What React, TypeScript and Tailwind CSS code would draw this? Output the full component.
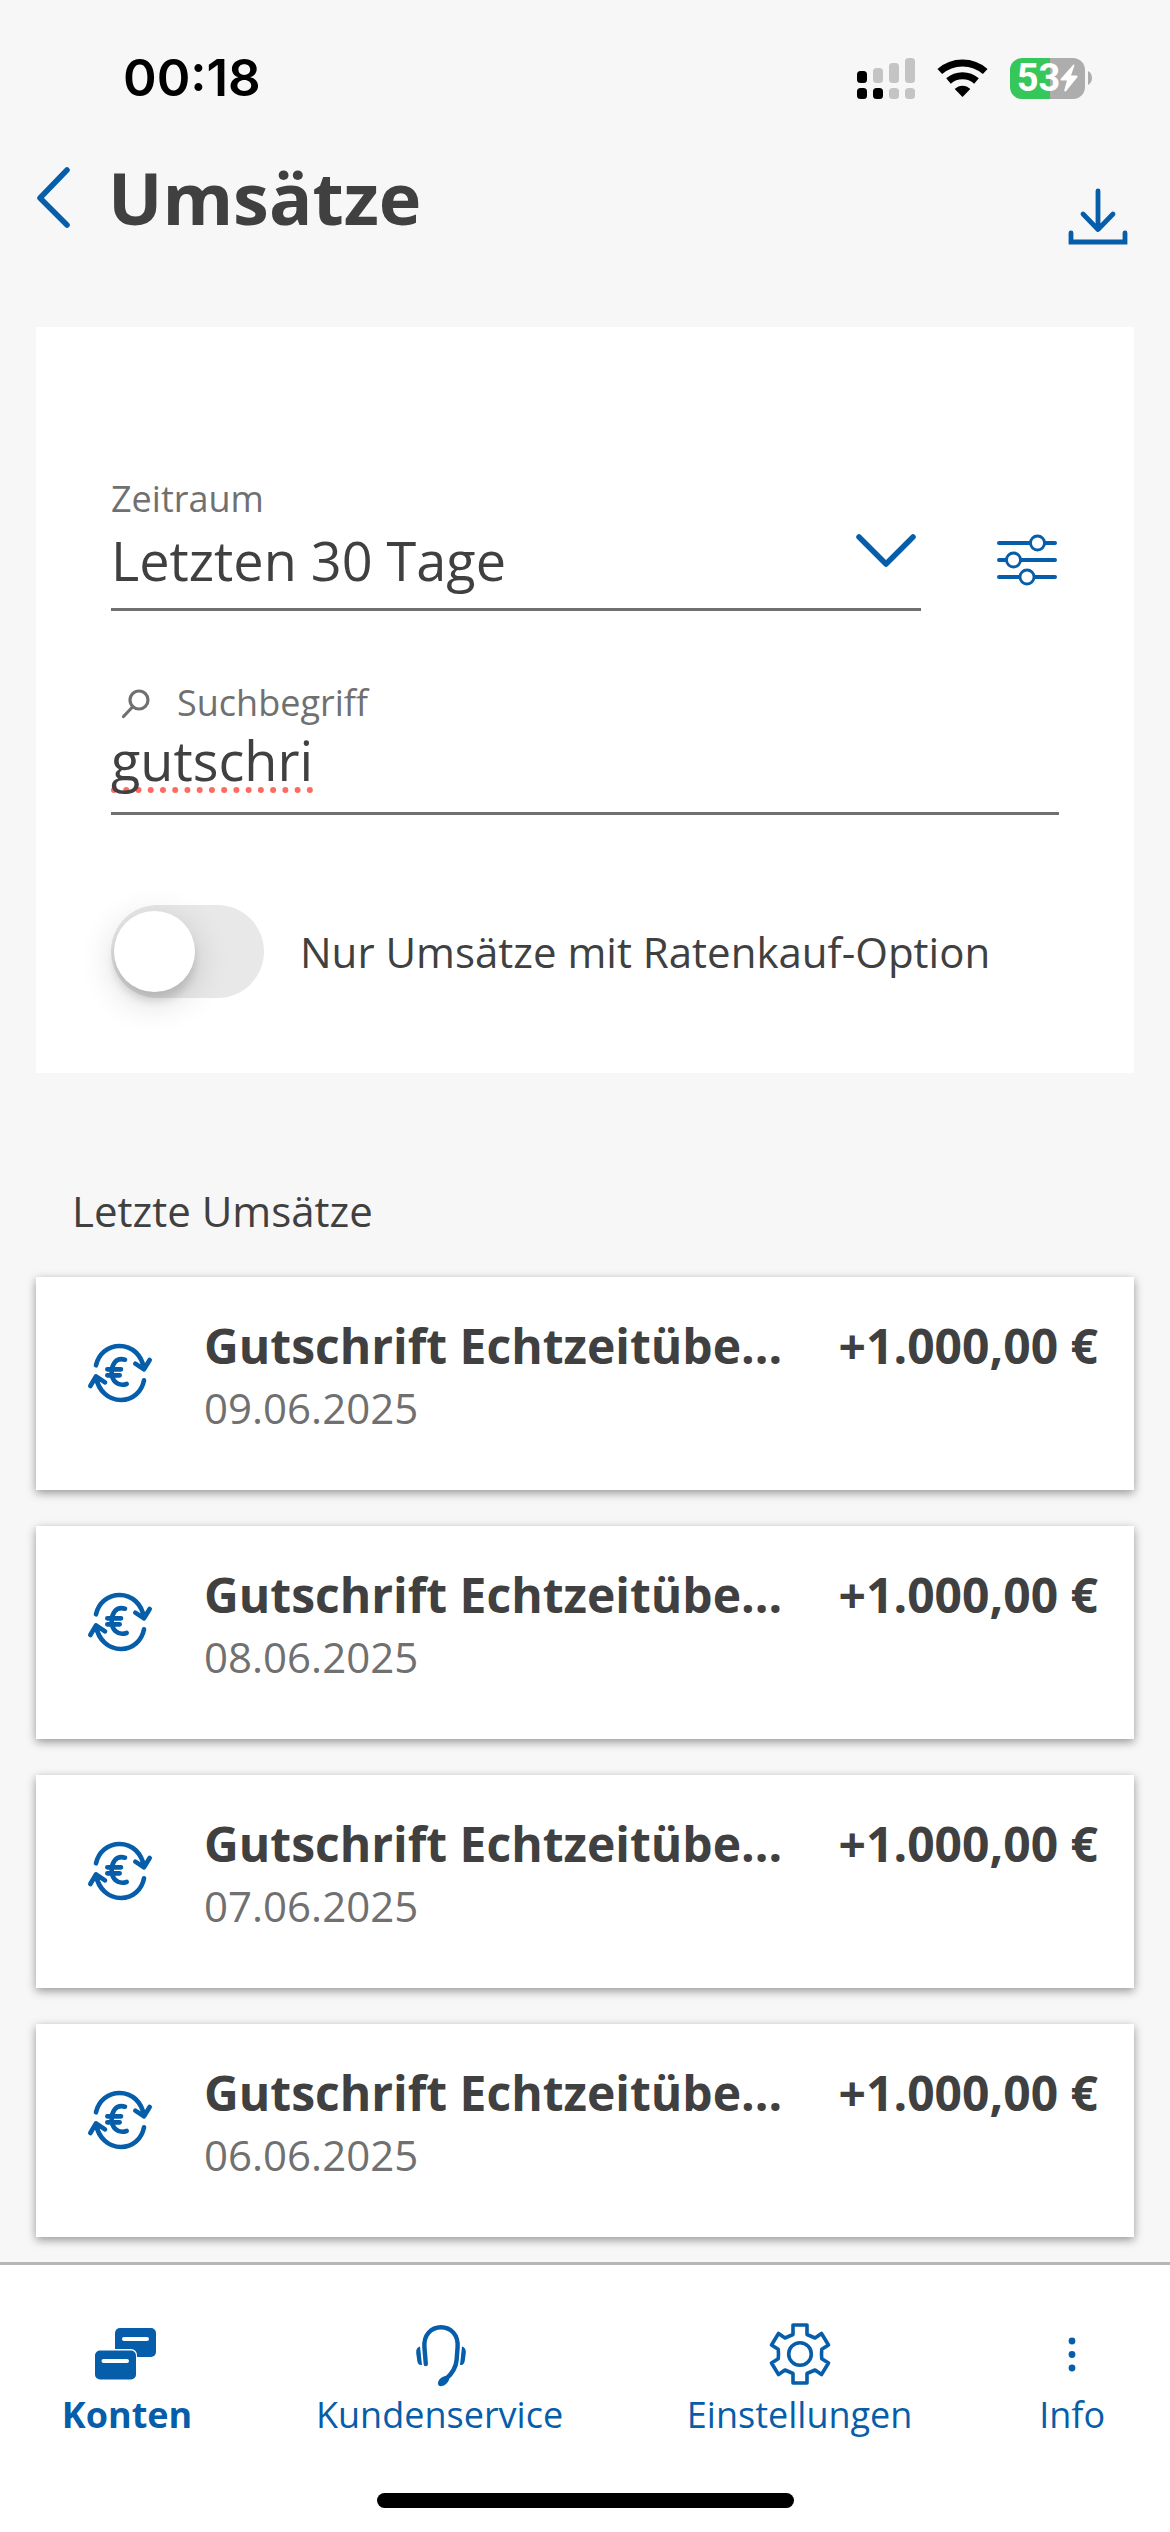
import { useState } from "react";

const transactions = [
  { title: "Gutschrift Echtzeitübe...", date: "09.06.2025", amount: "+1.000,00 €" },
  { title: "Gutschrift Echtzeitübe...", date: "08.06.2025", amount: "+1.000,00 €" },
  { title: "Gutschrift Echtzeitübe...", date: "07.06.2025", amount: "+1.000,00 €" },
  { title: "Gutschrift Echtzeitübe...", date: "06.06.2025", amount: "+1.000,00 €" },
];

const navItems = [
  { label: "Konten", icon: <AccountsIcon />, active: true },
  { label: "Kundenservice", icon: <HeadsetIcon />, active: false },
  { label: "Einstellungen", icon: <GearIcon />, active: false },
  { label: "Info", icon: <DotsIcon />, active: false },
];

function AccountsIcon() {
  return (
    <svg viewBox="0 0 72 72" className="size-[72px]" aria-hidden="true">
      <rect x="24" y="10" width="41" height="29" rx="5" fill="currentColor" />
      <path d="M33 21H56" stroke="#fff" strokeWidth="4" strokeLinecap="round" />
      <rect x="3" y="31" width="43" height="31" rx="6" fill="#fff" />
      <rect x="4" y="32.5" width="41" height="29" rx="5" fill="currentColor" />
      <path d="M12.5 43H36" stroke="#fff" strokeWidth="4" strokeLinecap="round" />
    </svg>
  );
}

function HeadsetIcon() {
  return (
    <svg viewBox="0 0 72 72" className="size-[72px]" aria-hidden="true">
      <path
        d="M21.8 46L20.4 29C19.6 17 27 9.2 37 9.2S54.4 17 53.6 29L52.6 42C52 49 48.5 55 42.5 60.5"
        fill="none"
        stroke="currentColor"
        strokeWidth="4.4"
        strokeLinecap="round"
      />
      <ellipse cx="39.5" cy="63" rx="6.5" ry="4" transform="rotate(-40 39.5 63)" fill="currentColor" />
      <path d="M16 28.5L18 47C14.8 47.5 13.6 45.5 13.2 42.5L12.2 35C11.9 31.5 13.2 29 16 28.5Z" fill="currentColor" />
      <path d="M58 28.5L56 47C59.2 47.5 60.4 45.5 60.8 42.5L61.8 35C62.1 31.5 60.8 29 58 28.5Z" fill="currentColor" />
    </svg>
  );
}

function GearIcon() {
  return (
    <svg
      viewBox="-36 -36 72 72"
      className="size-[72px]"
      fill="none"
      stroke="currentColor"
      strokeWidth="3.6"
      strokeLinejoin="round"
      aria-hidden="true"
    >
      <path d="M-7 -29H7V-19.5L15 -16L21.5 -20.5L28.5 -9L21.8 -4.7Q21.2 0 21.8 4.7L28.5 9L21.5 20.5L15 16L7 19.5V29H-7V19.5L-15 16L-21.5 20.5L-28.5 9L-21.8 4.7Q-21.2 0 -21.8 -4.7L-28.5 -9L-21.5 -20.5L-15 -16L-7 -19.5Z" />
      <circle r="11.3" />
    </svg>
  );
}

function DotsIcon() {
  return (
    <svg viewBox="0 0 72 72" className="size-[72px]" fill="currentColor" aria-hidden="true">
      <circle cx="36" cy="23" r="3.4" />
      <circle cx="36" cy="36.5" r="3.4" />
      <circle cx="36" cy="50" r="3.4" />
    </svg>
  );
}

function TransferIcon() {
  return (
    <svg
      viewBox="192 234 216 216"
      className="mt-6 size-[72px] shrink-0 text-[#065da9]"
      fill="none"
      stroke="currentColor"
      strokeWidth="14"
      strokeLinecap="round"
      strokeLinejoin="round"
      aria-hidden="true"
    >
      <path d="M228 316C236 281 264 258 299 258C336 258 366 285 372 327M346 311L372 328L389 300" />
      <path d="M372 361C365 396 338 420 303 420C265 420 235 392 228 351M211 378L228 349L255 367" />
      <path d="M315 299C286 291 275 316 275 337C275 361 292 381 320 372M262 328H303M262 346H299" />
    </svg>
  );
}

function StatusBar() {
  return (
    <div className="flex items-center justify-between pt-12 pr-[78px] pl-[123px] font-['Inter',sans-serif]">
      <span className="text-[51px] leading-[60px] font-semibold text-black">00:18</span>
      <div className="flex items-center gap-[22px]">
        <svg viewBox="0 0 58 41" className="h-[41px] w-[58px]" fill="#c4c4c4" aria-hidden="true">
          <rect y="13" width="10" height="12" rx="3.5" fill="#000" />
          <rect x="16" y="10" width="10" height="15" rx="3.5" />
          <rect x="32" y="5" width="10" height="20" rx="3.5" />
          <rect x="48" width="10" height="25" rx="3.5" />
          <rect y="30" width="10" height="11" rx="3.5" fill="#000" />
          <rect x="16" y="30" width="10" height="11" rx="3.5" fill="#000" />
          <rect x="32" y="30" width="10" height="11" rx="3.5" />
          <rect x="48" y="30" width="10" height="11" rx="3.5" />
        </svg>
        <svg viewBox="0 0 51 41" className="h-[41px] w-[51px]" aria-hidden="true">
          <path d="M2.8 13.5C15.5 2 35.5 2 48.2 13.5" fill="none" stroke="#000" strokeWidth="7" />
          <path d="M11.5 23C19.5 16 31.5 16 39.5 23" fill="none" stroke="#000" strokeWidth="7" />
          <path d="M17.7 31C22 26.5 29 26.5 33.3 31L25.5 39Z" />
        </svg>
        <div className="flex items-center gap-[3px]">
          <div className="flex h-[41px] w-[75px] items-center justify-center rounded-[12px] bg-linear-to-r from-[#35c759] from-53% to-[#adadad] to-53%">
            <span className="font-['Roboto',sans-serif] text-[38px] leading-[41px] font-bold text-white">53</span>
            <svg viewBox="0 0 18 28" className="h-7 w-[18px]" fill="#fff" aria-hidden="true">
              <path d="M13.5 .5L.6 15Q0 16.5 1.5 16.5H7L4.2 26.5Q4.5 28 6 27.3L17.5 13Q18 11.5 16.5 11.5H11L14.5 1.3Q14.5 .3 13.5 .5Z" />
            </svg>
          </div>
          <svg viewBox="0 0 4 14" className="h-3.5 w-1" aria-hidden="true">
            <path d="M0 0C5.3 2.5 5.3 11.5 0 14Z" fill="#adadad" />
          </svg>
        </div>
      </div>
    </div>
  );
}

function FilterCard() {
  const [period, setPeriod] = useState("30");
  const [query, setQuery] = useState("gutschri");
  const [onlyInstallments, setOnlyInstallments] = useState(false);

  return (
    <section className="mx-9 bg-white px-[75px] pt-[147px] pb-[75px]">
      <div className="flex items-end">
        <div className="min-w-0 flex-1">
          <label htmlFor="period" className="block text-[36px] leading-[50px] text-[#707070]">
            Zeitraum
          </label>
          <div className="relative -mt-1">
            <select
              id="period"
              value={period}
              onChange={(e) => setPeriod(e.target.value)}
              className="block h-[91px] w-full appearance-none border-b-[3px] border-[#707070] bg-transparent pb-3 text-[54px] text-[#404040] outline-none"
            >
              <option value="30">Letzten 30 Tage</option>
              <option value="90">Letzten 90 Tage</option>
            </select>
            <svg
              viewBox="0 0 66 39"
              className="pointer-events-none absolute top-3 right-0 h-[39px] w-[66px]"
              fill="none"
              stroke="#065da9"
              strokeWidth="5.5"
              strokeLinecap="round"
              strokeLinejoin="round"
              aria-hidden="true"
            >
              <path d="M4 5L31 32L58 5" />
            </svg>
          </div>
        </div>
        <button type="button" aria-label="Filter" className="mb-5 ml-[72px] flex h-[62px] w-[66px] items-center">
          <svg viewBox="0 0 66 54" className="h-[54px] w-[66px]" stroke="#065da9" strokeLinecap="round" aria-hidden="true">
            <path d="M6 10H62M6 27H62M6 44H62" strokeWidth="4" />
            <g fill="#fff" strokeWidth="2.8">
              <circle cx="44.5" cy="10" r="7" />
              <circle cx="20.5" cy="27" r="7" />
              <circle cx="34" cy="44" r="7" />
            </g>
          </svg>
        </button>
      </div>

      <div className="mt-[67px]">
        <label htmlFor="query" className="flex items-center gap-6 pl-2 text-[36px] leading-[50px] text-[#707070]">
          <svg
            viewBox="0 0 34 34"
            className="size-[34px]"
            fill="none"
            stroke="currentColor"
            strokeWidth="3.2"
            strokeLinecap="round"
            aria-hidden="true"
          >
            <circle cx="20" cy="14" r="9" />
            <path d="M13.5 21L4.5 30.5" />
          </svg>
          Suchbegriff
        </label>
        <input
          id="query"
          type="text"
          value={query}
          spellCheck={false}
          onChange={(e) => setQuery(e.target.value)}
          className="block h-[87px] w-full border-b-[3px] border-[#707070] bg-transparent pb-5 text-[54px] text-[#404040] underline decoration-[#ff6b61] decoration-dotted decoration-[6px] underline-offset-[6px] outline-none [text-decoration-skip-ink:none]"
        />
      </div>

      <div className="mt-[90px] flex items-center gap-9">
        <input
          id="installments"
          type="checkbox"
          role="switch"
          checked={onlyInstallments}
          onChange={(e) => setOnlyInstallments(e.target.checked)}
          className="relative h-[93px] w-[153px] shrink-0 appearance-none rounded-full bg-[#e8e8e8] before:absolute before:top-[6px] before:left-[3px] before:size-[81px] before:rounded-full before:bg-white before:shadow-[0_9px_36px_rgba(0,0,0,0.16),0_9px_9px_rgba(0,0,0,0.12)] before:transition-transform checked:bg-[#065da9] checked:before:translate-x-[66px]"
        />
        <label htmlFor="installments" className="text-[42px] leading-[60px] text-[#404040]">
          Nur Umsätze mit Ratenkauf-Option
        </label>
      </div>
    </section>
  );
}

export default function App() {
  return (
    <div className="flex min-h-screen flex-col bg-[#f7f7f7] font-['Open_Sans',sans-serif] text-[#404040]">
      <StatusBar />

      <header className="flex items-end justify-between pt-[41px] pr-9 pb-[82px] pl-[33px]">
        <div className="flex items-center gap-[33px]">
          <button type="button" aria-label="Zurück">
            <svg
              viewBox="0 0 42 66"
              className="h-[66px] w-[42px]"
              fill="none"
              stroke="#065da9"
              strokeWidth="5.5"
              strokeLinecap="round"
              strokeLinejoin="round"
              aria-hidden="true"
            >
              <path d="M34 6L7 34L34 61" />
            </svg>
          </button>
          <h1 className="text-[72px] leading-[96px] font-bold">Umsätze</h1>
        </div>
        <button type="button" aria-label="Herunterladen">
          <svg
            viewBox="0 0 72 60"
            className="h-[60px] w-[72px]"
            fill="none"
            stroke="#065da9"
            strokeWidth="4.8"
            strokeLinecap="round"
            aria-hidden="true"
          >
            <path d="M36 6V44M21 29L36 44.5L51 29" strokeLinejoin="round" />
            <path d="M9 48V57H63V48" />
          </svg>
        </button>
      </header>

      <main>
        <FilterCard />

        <section className="px-9 pt-[108px] pb-[25px]">
          <h2 className="pl-9 text-[42px] leading-[60px]">Letzte Umsätze</h2>
          <ul className="mt-9 flex flex-col gap-9">
            {transactions.map((item) => (
              <li
                key={item.date}
                className="flex items-start gap-12 bg-white pt-[37px] pr-9 pb-[52px] pl-12 shadow-[0_3px_9px_rgba(0,0,0,0.4)]"
              >
                <TransferIcon />
                <div className="min-w-0 flex-1">
                  <div className="flex justify-between gap-6 text-[48px] leading-[64px] font-bold">
                    <h3 className="truncate">{item.title}</h3>
                    <span className="whitespace-nowrap">{item.amount}</span>
                  </div>
                  <p className="text-[42px] leading-[60px] text-[#707070]">{item.date}</p>
                </div>
              </li>
            ))}
          </ul>
        </section>
      </main>

      <footer className="sticky bottom-0 mt-auto border-t-[3px] border-[#b7b7b7] bg-white pt-[53px] pb-6">
        <nav className="flex justify-around text-[#065da9]">
          {navItems.map((item) => (
            <a
              key={item.label}
              href="#"
              aria-current={item.active ? "page" : undefined}
              className={`flex flex-col items-center text-[36px] leading-[50px] ${item.active ? "font-bold" : ""}`}
            >
              {item.icon}
              {item.label}
            </a>
          ))}
        </nav>
        <div className="mx-auto mt-[53px] h-[15px] w-[417px] rounded-full bg-black" />
      </footer>
    </div>
  );
}
